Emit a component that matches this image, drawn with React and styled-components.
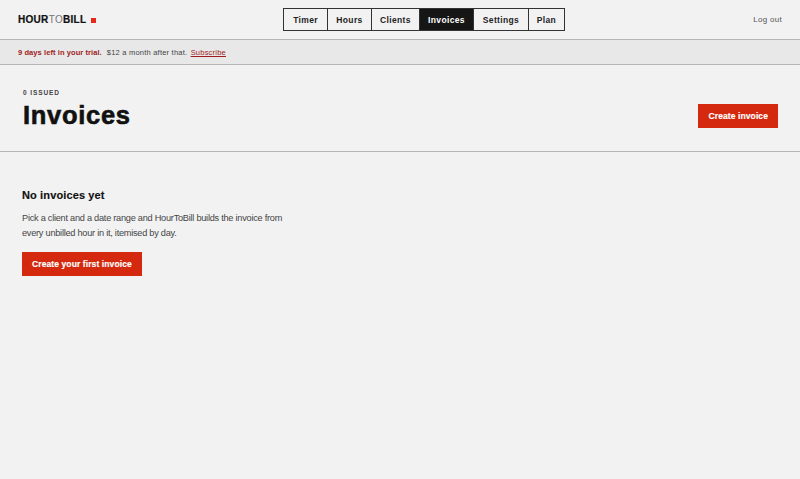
import React from 'react';
import styled, { createGlobalStyle } from 'styled-components';

const GlobalStyle = createGlobalStyle`
  html, body {
    margin: 0;
    padding: 0;
    height: 100%;
    background: #f2f2f3;
  }

  body {
    font-family: 'Liberation Sans', Arial, sans-serif;
    color: #111;
  }

  * {
    box-sizing: border-box;
  }
`;

const Layout = styled.div`
  display: flex;
  flex-direction: column;
  min-height: 479px;
`;

const TopBar = styled.header`
  display: grid;
  grid-template-columns: 265px auto 1fr;
  align-items: center;
  height: 40px;
  padding: 0 18px;
  border-bottom: 1px solid #b5b5b5;
`;

const Logo = styled.div`
  display: flex;
  align-items: center;
  font-size: 10px;
  font-weight: 700;
  letter-spacing: 0.3px;
  -webkit-text-stroke: 0.2px #111;
  color: #111;

  span {
    font-weight: 400;
    color: #777;
    -webkit-text-stroke: 0;
  }

  i {
    width: 5px;
    height: 5px;
    margin-left: 5px;
    margin-top: 1px;
    background: #e8281a;
  }
`;

const Nav = styled.nav`
  display: flex;
  height: 23px;
  border: 1px solid #333;
`;

const NavItem = styled.a`
  display: flex;
  align-items: center;
  justify-content: center;
  width: ${(props) => props.$width}px;
  font-size: 8.5px;
  font-weight: 700;
  letter-spacing: 0.35px;
  color: ${(props) => (props.$active ? '#fff' : '#222')};
  background: ${(props) => (props.$active ? '#161616' : 'transparent')};

  & + & {
    border-left: 1px solid #333;
  }
`;

const LogOut = styled.a`
  justify-self: end;
  font-size: 8px;
  letter-spacing: 0.3px;
  color: #555;
`;

const TrialBanner = styled.div`
  display: flex;
  align-items: center;
  gap: 5px;
  height: 25px;
  padding: 0 18px;
  background: #e8e8e8;
  border-bottom: 1px solid #b5b5b5;
  font-size: 7.5px;
  letter-spacing: 0.22px;
  color: #444;

  strong {
    letter-spacing: 0.08px;
    color: #a11c1c;
  }

  a {
    margin-left: 1px;
    color: #a11c1c;
    text-decoration: underline;
  }
`;

const PageHeader = styled.section`
  display: flex;
  align-items: flex-end;
  justify-content: space-between;
  height: 87px;
  padding: 0 22px 21px;
  border-bottom: 1px solid #b5b5b5;
`;

const Eyebrow = styled.div`
  margin-bottom: 4px;
  padding-left: 1px;
  font-size: 6.5px;
  font-weight: 700;
  letter-spacing: 0.9px;
  color: #444;
`;

const Title = styled.h1`
  margin: 0;
  padding-left: 1px;
  font-size: 25.5px;
  line-height: 30px;
  font-weight: 700;
  letter-spacing: 0.7px;
  -webkit-text-stroke: 0.6px #111;
  color: #111;
`;

const RedButton = styled.a`
  display: inline-flex;
  align-items: center;
  height: 24px;
  padding: 0 10px;
  background: #d4290f;
  color: #fff;
  font-size: 8.5px;
  font-weight: 700;
  letter-spacing: 0.1px;
  -webkit-text-stroke: 0.15px #fff;
`;

const HeaderButton = styled(RedButton)`
  margin-bottom: 2px;
`;

const EmptyState = styled.section`
  display: flex;
  flex-direction: column;
  align-items: flex-start;
  width: 265px;
  margin-left: 22px;
  padding-top: 35px;
`;

const EmptyTitle = styled.h2`
  margin: 0 0 8px;
  font-size: 11px;
  line-height: 16px;
  font-weight: 700;
  letter-spacing: 0.13px;
  -webkit-text-stroke: 0.15px #111;
  color: #111;
`;

const EmptyText = styled.p`
  margin: 0 0 12px;
  font-size: 9.2px;
  line-height: 14.5px;
  letter-spacing: -0.25px;
  color: #444;
`;

const navItems = [
  { label: 'Timer', width: 43 },
  { label: 'Hours', width: 44 },
  { label: 'Clients', width: 48 },
  { label: 'Invoices', width: 54, active: true },
  { label: 'Settings', width: 55 },
  { label: 'Plan', width: 36 },
];

const App = () => {
  return (
    <Layout>
      <GlobalStyle />
      <TopBar>
        <Logo>
          HOUR<span>TO</span>BILL
          <i />
        </Logo>
        <Nav>
          {navItems.map((item) => (
            <NavItem key={item.label} $width={item.width} $active={item.active}>
              {item.label}
            </NavItem>
          ))}
        </Nav>
        <LogOut>Log out</LogOut>
      </TopBar>
      <TrialBanner>
        <strong>9 days left in your trial.</strong>
        <span>
          $12 a month after that. <a>Subscribe</a>
        </span>
      </TrialBanner>
      <PageHeader>
        <div>
          <Eyebrow>0 ISSUED</Eyebrow>
          <Title>Invoices</Title>
        </div>
        <HeaderButton>Create invoice</HeaderButton>
      </PageHeader>
      <EmptyState>
        <EmptyTitle>No invoices yet</EmptyTitle>
        <EmptyText>
          Pick a client and a date range and HourToBill builds the invoice from every unbilled hour
          in it, itemised by day.
        </EmptyText>
        <RedButton>Create your first invoice</RedButton>
      </EmptyState>
    </Layout>
  );
};

export default App;
